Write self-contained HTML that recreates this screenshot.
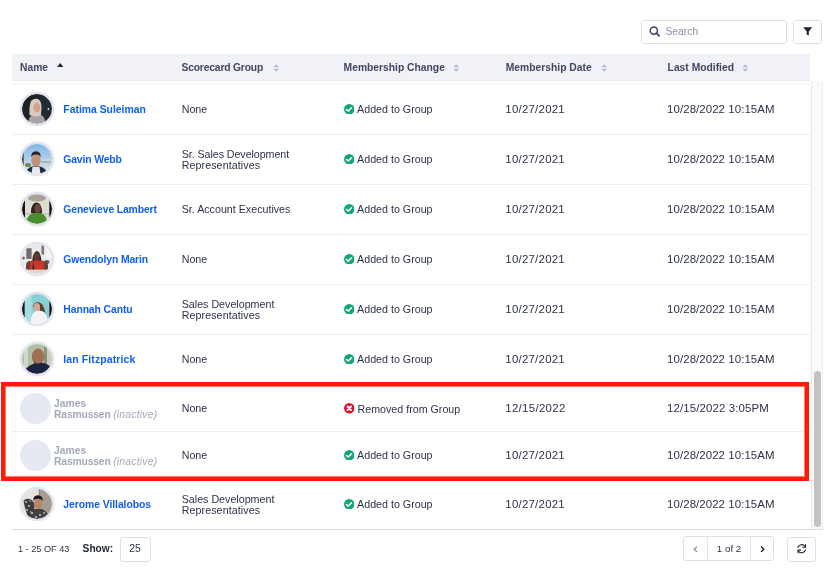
<!DOCTYPE html>
<html><head><meta charset="utf-8"><style>
html,body{margin:0;padding:0;width:835px;height:575px;overflow:hidden;background:#fff;}
body{position:relative;font-family:"Liberation Sans",sans-serif;}
#w{position:absolute;left:0;top:0;width:835px;height:575px;will-change:transform;}
.t{position:absolute;white-space:nowrap;line-height:1;}
.ic{position:absolute;display:block;}
.box{position:absolute;border:1px solid #dde0e8;border-radius:3px;background:#fff;}
.av{position:absolute;width:30px;height:30px;border-radius:50%;border:1px solid #d8dbe7;box-shadow:0 0 0 1px #e3e5ee,0 0 1.5px 1px rgba(200,204,222,0.6);overflow:hidden;}
.av svg{display:block;}
</style></head><body><div id="w">
<div class="box" style="left:641px;top:19.5px;width:144px;height:22px;"></div>
<svg class="ic" style="left:648.6px;top:25.5px" width="12" height="12" viewBox="0 0 12 12"><circle cx="4.8" cy="4.6" r="3.6" fill="none" stroke="#394063" stroke-width="1.5"/><path d="M7.4 7.2 L10.1 9.9" stroke="#394063" stroke-width="1.7" stroke-linecap="round"/></svg>
<div class="t" style="left:665.4px;top:26.57px;font-size:10.2px;color:#8b90a3;font-weight:400;font-style:normal;letter-spacing:0.1px;">Search</div>
<div class="box" style="left:793px;top:19.5px;width:27px;height:22px;"></div>
<svg class="ic" style="left:803px;top:27px" width="10" height="9" viewBox="0 0 10 9"><path d="M0.3 0.3 H9.2 L5.8 4.4 V8.6 L3.7 7.4 V4.4 Z" fill="#1e2333"/></svg>
<div style="position:absolute;left:12px;top:54px;width:798px;height:26px;background:#f0f2f7;"></div>
<div style="position:absolute;left:12px;top:80px;width:798px;height:1px;background:#e6e9f1;"></div>
<div style="position:absolute;left:12px;top:83.5px;width:798px;height:1px;background:#eff1f5;"></div>
<div class="t" style="left:20px;top:63.48px;font-size:10.3px;color:#404762;font-weight:700;font-style:normal;">Name</div>
<svg class="ic" style="left:56.8px;top:63px" width="6.5" height="4.2" viewBox="0 0 6.5 4.2"><path d="M0 4.1 L3.25 0.1 L6.5 4.1 Z" fill="#1e2333"/></svg>
<div class="t" style="left:181.5px;top:63.48px;font-size:10.3px;color:#404762;font-weight:700;font-style:normal;letter-spacing:-0.17px;">Scorecard Group</div>
<svg class="ic" style="left:272.5px;top:63.5px" width="6.5" height="8" viewBox="0 0 6.5 8"><path d="M0.3 3.3 L3.25 0.2 L6.2 3.3 Z M0.3 4.7 L3.25 7.8 L6.2 4.7 Z" fill="#b7bbcb"/></svg>
<div class="t" style="left:343.6px;top:63.48px;font-size:10.3px;color:#404762;font-weight:700;font-style:normal;">Membership Change</div>
<svg class="ic" style="left:452.7px;top:63.5px" width="6.5" height="8" viewBox="0 0 6.5 8"><path d="M0.3 3.3 L3.25 0.2 L6.2 3.3 Z M0.3 4.7 L3.25 7.8 L6.2 4.7 Z" fill="#b7bbcb"/></svg>
<div class="t" style="left:505.8px;top:63.48px;font-size:10.3px;color:#404762;font-weight:700;font-style:normal;">Membership Date</div>
<svg class="ic" style="left:600.5px;top:63.5px" width="6.5" height="8" viewBox="0 0 6.5 8"><path d="M0.3 3.3 L3.25 0.2 L6.2 3.3 Z M0.3 4.7 L3.25 7.8 L6.2 4.7 Z" fill="#b7bbcb"/></svg>
<div class="t" style="left:667.6px;top:63.48px;font-size:10.3px;color:#404762;font-weight:700;font-style:normal;">Last Modified</div>
<svg class="ic" style="left:742px;top:63.5px" width="6.5" height="8" viewBox="0 0 6.5 8"><path d="M0.3 3.3 L3.25 0.2 L6.2 3.3 Z M0.3 4.7 L3.25 7.8 L6.2 4.7 Z" fill="#b7bbcb"/></svg>
<div style="position:absolute;left:811px;top:81px;width:11px;height:448px;background:#fafafa;border-left:1px solid #e8e8e8;border-right:1px solid #efefef;box-sizing:border-box;width:12px"></div>
<div style="position:absolute;left:814px;top:371px;width:7px;height:156px;background:#c2c2c2;border-radius:4px;"></div>
<div style="position:absolute;left:12px;top:134px;width:798px;height:1px;background:#eceef4;"></div>
<div style="position:absolute;left:12px;top:184px;width:798px;height:1px;background:#eceef4;"></div>
<div style="position:absolute;left:12px;top:234px;width:798px;height:1px;background:#eceef4;"></div>
<div style="position:absolute;left:12px;top:284px;width:798px;height:1px;background:#eceef4;"></div>
<div style="position:absolute;left:12px;top:334px;width:798px;height:1px;background:#eceef4;"></div>
<div style="position:absolute;left:12px;top:384px;width:798px;height:1px;background:#eceef4;"></div>
<div style="position:absolute;left:12px;top:431px;width:798px;height:1px;background:#eceef4;"></div>
<div style="position:absolute;left:12px;top:478px;width:798px;height:1px;background:#eceef4;"></div>
<div style="position:absolute;left:12px;top:529px;width:811px;height:1px;background:#d9dde7;"></div>
<div class="av" style="left:20.8px;top:93px;"><svg width="30" height="30" viewBox="0 0 30 30"><defs><clipPath id="c109"><circle cx="15" cy="15" r="15"/></clipPath><filter id="b109" x="-10%" y="-10%" width="120%" height="120%"><feGaussianBlur stdDeviation="0.45"/></filter></defs><g clip-path="url(#c109)"><g filter="url(#b109)"><rect width="30" height="30" fill="#1c2127"/><rect x="18" y="0" width="12" height="30" fill="#222a30"/><path d="M6 30 Q6.5 22 11 21 L19 21 Q23 22 23.5 30Z" fill="#a8a3a8"/><path d="M7.5 21 Q7 12 9 7 Q12 4 16 5 Q19.5 7 19.5 13 L19 21 Q16 23 12 22.5Z" fill="#d8ccc0"/><ellipse cx="14.8" cy="13.5" rx="3.4" ry="5" fill="#d4a28a"/><circle cx="26.4" cy="15" r="0.9" fill="#e8eef0"/></g></g></svg></div>
<div class="t" style="left:63.3px;top:104.70px;font-size:10.4px;color:#0f5ef5;font-weight:700;font-style:normal;">Fatima Suleiman</div>
<div class="t" style="left:181.7px;top:103.64px;font-size:10.7px;color:#2c3249;font-weight:400;font-style:normal;">None</div>
<svg class="ic" style="left:343.7px;top:103.8px" width="10.5" height="10.5" viewBox="0 0 10.5 10.5"><circle cx="5.25" cy="5.25" r="5.25" fill="#12a873"/><path d="M2.4 5.5 L4.3 7.1 L7.5 3.8" fill="none" stroke="#fff" stroke-width="1.5" stroke-linecap="round" stroke-linejoin="round"/></svg>
<div class="t" style="left:357.1px;top:103.74px;font-size:10.7px;color:#2c3249;font-weight:400;font-style:normal;">Added to Group</div>
<div class="t" style="left:505.3px;top:104.41px;font-size:11.45px;color:#2c3249;font-weight:400;font-style:normal;letter-spacing:0.24px;">10/27/2021</div>
<div class="t" style="left:667.1px;top:104.41px;font-size:11.45px;color:#2c3249;font-weight:400;font-style:normal;letter-spacing:0.07px;">10/28/2022 10:15AM</div>
<div class="av" style="left:20.8px;top:143px;"><svg width="30" height="30" viewBox="0 0 30 30"><defs><clipPath id="c159"><circle cx="15" cy="15" r="15"/></clipPath><filter id="b159" x="-10%" y="-10%" width="120%" height="120%"><feGaussianBlur stdDeviation="0.45"/></filter></defs><g clip-path="url(#c159)"><g filter="url(#b159)"><defs><linearGradient id="gsky" x1="0" y1="0" x2="0" y2="1"><stop offset="0" stop-color="#7fb6e6"/><stop offset="1" stop-color="#dfe8ee"/></linearGradient></defs><rect width="30" height="30" fill="url(#gsky)"/><rect x="0" y="8" width="1.6" height="16" fill="#333"/><rect x="19" y="15" width="11" height="7" fill="#d0d4d6"/><rect x="19" y="17" width="11" height="2" fill="#9fb8c8"/><ellipse cx="6" cy="21" rx="3" ry="2" fill="#6d8a4a"/><ellipse cx="14" cy="16.5" rx="4.6" ry="6.3" fill="#c2917a"/><path d="M9.2 13 Q9 7.5 14 7.3 Q18.8 7.5 18.6 13 Q17 10.5 14 10.6 Q11 10.5 9.2 13Z" fill="#2b2320"/><path d="M3 30 Q4.5 24 10 22.5 L18 22.5 Q24 24 26 30Z" fill="#262d3c"/><path d="M9.5 30 L10.5 23 L17.5 23 L18.5 30Z" fill="#e6e8f0"/></g></g></svg></div>
<div class="t" style="left:63.3px;top:154.70px;font-size:10.4px;color:#0f5ef5;font-weight:700;font-style:normal;letter-spacing:-0.15px;">Gavin Webb</div>
<div class="t" style="left:181.7px;top:149.34px;font-size:10.7px;color:#2c3249;font-weight:400;font-style:normal;letter-spacing:-0.06px;">Sr. Sales Development</div>
<div class="t" style="left:181.7px;top:160.24px;font-size:10.7px;color:#2c3249;font-weight:400;font-style:normal;letter-spacing:0.08px;">Representatives</div>
<svg class="ic" style="left:343.7px;top:153.8px" width="10.5" height="10.5" viewBox="0 0 10.5 10.5"><circle cx="5.25" cy="5.25" r="5.25" fill="#12a873"/><path d="M2.4 5.5 L4.3 7.1 L7.5 3.8" fill="none" stroke="#fff" stroke-width="1.5" stroke-linecap="round" stroke-linejoin="round"/></svg>
<div class="t" style="left:357.1px;top:153.74px;font-size:10.7px;color:#2c3249;font-weight:400;font-style:normal;">Added to Group</div>
<div class="t" style="left:505.3px;top:154.41px;font-size:11.45px;color:#2c3249;font-weight:400;font-style:normal;letter-spacing:0.24px;">10/27/2021</div>
<div class="t" style="left:667.1px;top:154.41px;font-size:11.45px;color:#2c3249;font-weight:400;font-style:normal;letter-spacing:0.07px;">10/28/2022 10:15AM</div>
<div class="av" style="left:20.8px;top:193px;"><svg width="30" height="30" viewBox="0 0 30 30"><defs><clipPath id="c209"><circle cx="15" cy="15" r="15"/></clipPath><filter id="b209" x="-10%" y="-10%" width="120%" height="120%"><feGaussianBlur stdDeviation="0.45"/></filter></defs><g clip-path="url(#c209)"><g filter="url(#b209)"><rect width="30" height="30" fill="#dedcd5"/><rect x="0" y="0" width="3" height="30" fill="#121212"/><rect x="27.3" y="0" width="2.7" height="30" fill="#121212"/><ellipse cx="15" cy="4" rx="9" ry="3.6" fill="#a9a396"/><rect x="3" y="19" width="24" height="2" fill="#c8c8c4"/><path d="M9 19 Q9 9 14.5 8.6 Q20 9 20 19Z" fill="#2a211c"/><ellipse cx="15.6" cy="14.5" rx="3.2" ry="4.6" fill="#6b4a3a"/><path d="M4 30 Q5 21 11 19 L19 19 Q25 21 25.5 30Z" fill="#4e8d33"/><rect x="3" y="24" width="1.5" height="6" fill="#46607a"/></g></g></svg></div>
<div class="t" style="left:63.3px;top:204.70px;font-size:10.4px;color:#0f5ef5;font-weight:700;font-style:normal;letter-spacing:-0.14px;">Genevieve Lambert</div>
<div class="t" style="left:181.7px;top:203.64px;font-size:10.7px;color:#2c3249;font-weight:400;font-style:normal;">Sr. Account Executives</div>
<svg class="ic" style="left:343.7px;top:203.8px" width="10.5" height="10.5" viewBox="0 0 10.5 10.5"><circle cx="5.25" cy="5.25" r="5.25" fill="#12a873"/><path d="M2.4 5.5 L4.3 7.1 L7.5 3.8" fill="none" stroke="#fff" stroke-width="1.5" stroke-linecap="round" stroke-linejoin="round"/></svg>
<div class="t" style="left:357.1px;top:203.74px;font-size:10.7px;color:#2c3249;font-weight:400;font-style:normal;">Added to Group</div>
<div class="t" style="left:505.3px;top:204.41px;font-size:11.45px;color:#2c3249;font-weight:400;font-style:normal;letter-spacing:0.24px;">10/27/2021</div>
<div class="t" style="left:667.1px;top:204.41px;font-size:11.45px;color:#2c3249;font-weight:400;font-style:normal;letter-spacing:0.07px;">10/28/2022 10:15AM</div>
<div class="av" style="left:20.8px;top:243px;"><svg width="30" height="30" viewBox="0 0 30 30"><defs><clipPath id="c259"><circle cx="15" cy="15" r="15"/></clipPath><filter id="b259" x="-10%" y="-10%" width="120%" height="120%"><feGaussianBlur stdDeviation="0.45"/></filter></defs><g clip-path="url(#c259)"><g filter="url(#b259)"><rect width="30" height="30" fill="#eaeaea"/><rect x="4.3" y="4.3" width="5.3" height="10.6" fill="#716b70"/><rect x="19.5" y="1.5" width="2.5" height="9" fill="#7a7575"/><rect x="24" y="5" width="5" height="9" fill="#f4f4f2"/><ellipse cx="25" cy="18" rx="2.5" ry="2" fill="#5a6474"/><ellipse cx="1.5" cy="14" rx="1.3" ry="1.5" fill="#6e5a4e"/><path d="M10.2 25 Q9.5 8 15 7 Q20 8 19.5 25Z" fill="#2b1d19"/><ellipse cx="14.8" cy="12.5" rx="3.2" ry="4.3" fill="#5b3a2e"/><path d="M3.5 26 Q4.5 17 10 16.5 L20 16.5 Q25.5 17 26 26Z" fill="#c8372b"/><path d="M4 22 Q4 17 8 17 L8 26 L4 26Z" fill="#6a4030"/><path d="M26 22 Q26 17 22 17 L22 26 L26 26Z" fill="#6a4030"/><path d="M11 17 L12.5 26 L10.5 26Z" fill="#2b1d19"/><rect x="0" y="25.6" width="30" height="4.4" fill="#dcd8cb"/></g></g></svg></div>
<div class="t" style="left:63.3px;top:254.70px;font-size:10.4px;color:#0f5ef5;font-weight:700;font-style:normal;letter-spacing:-0.13px;">Gwendolyn Marin</div>
<div class="t" style="left:181.7px;top:253.64px;font-size:10.7px;color:#2c3249;font-weight:400;font-style:normal;">None</div>
<svg class="ic" style="left:343.7px;top:253.8px" width="10.5" height="10.5" viewBox="0 0 10.5 10.5"><circle cx="5.25" cy="5.25" r="5.25" fill="#12a873"/><path d="M2.4 5.5 L4.3 7.1 L7.5 3.8" fill="none" stroke="#fff" stroke-width="1.5" stroke-linecap="round" stroke-linejoin="round"/></svg>
<div class="t" style="left:357.1px;top:253.74px;font-size:10.7px;color:#2c3249;font-weight:400;font-style:normal;">Added to Group</div>
<div class="t" style="left:505.3px;top:254.41px;font-size:11.45px;color:#2c3249;font-weight:400;font-style:normal;letter-spacing:0.24px;">10/27/2021</div>
<div class="t" style="left:667.1px;top:254.41px;font-size:11.45px;color:#2c3249;font-weight:400;font-style:normal;letter-spacing:0.07px;">10/28/2022 10:15AM</div>
<div class="av" style="left:20.8px;top:293px;"><svg width="30" height="30" viewBox="0 0 30 30"><defs><clipPath id="c309"><circle cx="15" cy="15" r="15"/></clipPath><filter id="b309" x="-10%" y="-10%" width="120%" height="120%"><feGaussianBlur stdDeviation="0.45"/></filter></defs><g clip-path="url(#c309)"><g filter="url(#b309)"><rect width="30" height="30" fill="#88d0d4"/><rect x="2.6" y="0" width="7" height="30" fill="#a6dfe2"/><rect x="0" y="0" width="2.6" height="30" fill="#121212"/><rect x="27.4" y="0" width="2.6" height="30" fill="#121212"/><path d="M11 13 Q11 8 16.5 8.2 Q22 8.8 23.5 20 L19 20 L18 15Z" fill="#5b3d2f"/><ellipse cx="14.8" cy="13.3" rx="3.3" ry="4.2" fill="#d4a994"/><path d="M8.5 30 Q8.5 19 14 17 L20 17 Q26 19 26 30Z" fill="#f4f4f4"/></g></g></svg></div>
<div class="t" style="left:63.3px;top:304.70px;font-size:10.4px;color:#0f5ef5;font-weight:700;font-style:normal;letter-spacing:-0.1px;">Hannah Cantu</div>
<div class="t" style="left:181.7px;top:299.34px;font-size:10.7px;color:#2c3249;font-weight:400;font-style:normal;">Sales Development</div>
<div class="t" style="left:181.7px;top:310.24px;font-size:10.7px;color:#2c3249;font-weight:400;font-style:normal;letter-spacing:0.08px;">Representatives</div>
<svg class="ic" style="left:343.7px;top:303.8px" width="10.5" height="10.5" viewBox="0 0 10.5 10.5"><circle cx="5.25" cy="5.25" r="5.25" fill="#12a873"/><path d="M2.4 5.5 L4.3 7.1 L7.5 3.8" fill="none" stroke="#fff" stroke-width="1.5" stroke-linecap="round" stroke-linejoin="round"/></svg>
<div class="t" style="left:357.1px;top:303.74px;font-size:10.7px;color:#2c3249;font-weight:400;font-style:normal;">Added to Group</div>
<div class="t" style="left:505.3px;top:304.41px;font-size:11.45px;color:#2c3249;font-weight:400;font-style:normal;letter-spacing:0.24px;">10/27/2021</div>
<div class="t" style="left:667.1px;top:304.41px;font-size:11.45px;color:#2c3249;font-weight:400;font-style:normal;letter-spacing:0.07px;">10/28/2022 10:15AM</div>
<div class="av" style="left:20.8px;top:343px;"><svg width="30" height="30" viewBox="0 0 30 30"><defs><clipPath id="c359"><circle cx="15" cy="15" r="15"/></clipPath><filter id="b359" x="-10%" y="-10%" width="120%" height="120%"><feGaussianBlur stdDeviation="0.45"/></filter></defs><g clip-path="url(#c359)"><g filter="url(#b359)"><rect width="30" height="30" fill="#b3bfa3"/><rect x="2" y="0" width="4" height="30" fill="#cfd8c8"/><rect x="22" y="0" width="3" height="30" fill="#8a8f78"/><rect x="25" y="0" width="5" height="30" fill="#c4ceb8"/><ellipse cx="16" cy="12.6" rx="6.2" ry="8" fill="#9f6f56"/><path d="M12 18 Q16 22 20 18 L20 21 Q16 23 12 21Z" fill="#2c221e"/><path d="M1.5 30 Q4 22 11 20 L22 19 Q28 21 29.5 25 L29 30Z" fill="#1b2340"/></g></g></svg></div>
<div class="t" style="left:63.3px;top:354.70px;font-size:10.4px;color:#0f5ef5;font-weight:700;font-style:normal;letter-spacing:0.15px;">Ian Fitzpatrick</div>
<div class="t" style="left:181.7px;top:353.64px;font-size:10.7px;color:#2c3249;font-weight:400;font-style:normal;">None</div>
<svg class="ic" style="left:343.7px;top:353.8px" width="10.5" height="10.5" viewBox="0 0 10.5 10.5"><circle cx="5.25" cy="5.25" r="5.25" fill="#12a873"/><path d="M2.4 5.5 L4.3 7.1 L7.5 3.8" fill="none" stroke="#fff" stroke-width="1.5" stroke-linecap="round" stroke-linejoin="round"/></svg>
<div class="t" style="left:357.1px;top:353.74px;font-size:10.7px;color:#2c3249;font-weight:400;font-style:normal;">Added to Group</div>
<div class="t" style="left:505.3px;top:354.41px;font-size:11.45px;color:#2c3249;font-weight:400;font-style:normal;letter-spacing:0.24px;">10/27/2021</div>
<div class="t" style="left:667.1px;top:354.41px;font-size:11.45px;color:#2c3249;font-weight:400;font-style:normal;letter-spacing:0.07px;">10/28/2022 10:15AM</div>
<div style="position:absolute;left:20px;top:392.5px;width:31px;height:31px;border-radius:50%;background:#e6e9f1;"></div>
<div class="t" style="left:54px;top:399.40px;font-size:10.4px;color:#a4a9bb;font-weight:700;font-style:normal;">James</div>
<div class="t" style="left:54px;top:410.30px;font-size:10.4px;color:#a4a9bb;font-weight:700;font-style:normal;letter-spacing:-0.2px;">Rasmussen</div>
<div class="t" style="left:113.2px;top:410.30px;font-size:10.4px;color:#a4a9bb;font-weight:400;font-style:italic;letter-spacing:0.2px;">(inactive)</div>
<div class="t" style="left:181.7px;top:402.64px;font-size:10.7px;color:#2c3249;font-weight:400;font-style:normal;">None</div>
<svg class="ic" style="left:343.8px;top:403.0px" width="10.5" height="10.5" viewBox="0 0 10.5 10.5"><circle cx="5.25" cy="5.25" r="5.25" fill="#de0f2f"/><path d="M3.5 3.5 L7 7 M7 3.5 L3.5 7" fill="none" stroke="#fff" stroke-width="1.9" stroke-linecap="round"/></svg>
<div class="t" style="left:357.5px;top:403.74px;font-size:10.7px;color:#2c3249;font-weight:400;font-style:normal;">Removed from Group</div>
<div class="t" style="left:505.3px;top:403.41px;font-size:11.45px;color:#2c3249;font-weight:400;font-style:normal;letter-spacing:0.3px;">12/15/2022</div>
<div class="t" style="left:667.1px;top:403.41px;font-size:11.45px;color:#2c3249;font-weight:400;font-style:normal;letter-spacing:0.12px;">12/15/2022 3:05PM</div>
<div style="position:absolute;left:20px;top:439.5px;width:31px;height:31px;border-radius:50%;background:#e6e9f1;"></div>
<div class="t" style="left:54px;top:446.40px;font-size:10.4px;color:#a4a9bb;font-weight:700;font-style:normal;">James</div>
<div class="t" style="left:54px;top:457.30px;font-size:10.4px;color:#a4a9bb;font-weight:700;font-style:normal;letter-spacing:-0.2px;">Rasmussen</div>
<div class="t" style="left:113.2px;top:457.30px;font-size:10.4px;color:#a4a9bb;font-weight:400;font-style:italic;letter-spacing:0.2px;">(inactive)</div>
<div class="t" style="left:181.7px;top:449.64px;font-size:10.7px;color:#2c3249;font-weight:400;font-style:normal;">None</div>
<svg class="ic" style="left:343.7px;top:449.8px" width="10.5" height="10.5" viewBox="0 0 10.5 10.5"><circle cx="5.25" cy="5.25" r="5.25" fill="#12a873"/><path d="M2.4 5.5 L4.3 7.1 L7.5 3.8" fill="none" stroke="#fff" stroke-width="1.5" stroke-linecap="round" stroke-linejoin="round"/></svg>
<div class="t" style="left:357.1px;top:449.74px;font-size:10.7px;color:#2c3249;font-weight:400;font-style:normal;">Added to Group</div>
<div class="t" style="left:505.3px;top:450.41px;font-size:11.45px;color:#2c3249;font-weight:400;font-style:normal;letter-spacing:0.24px;">10/27/2021</div>
<div class="t" style="left:667.1px;top:450.41px;font-size:11.45px;color:#2c3249;font-weight:400;font-style:normal;letter-spacing:0.07px;">10/28/2022 10:15AM</div>
<div class="av" style="left:20.8px;top:488px;"><svg width="30" height="30" viewBox="0 0 30 30"><defs><clipPath id="c504"><circle cx="15" cy="15" r="15"/></clipPath><filter id="b504" x="-10%" y="-10%" width="120%" height="120%"><feGaussianBlur stdDeviation="0.45"/></filter></defs><g clip-path="url(#c504)"><g filter="url(#b504)"><rect width="30" height="30" fill="#e6e4e0"/><rect x="16.8" y="0" width="13.2" height="30" fill="#a59c92"/><rect x="16.8" y="0" width="1" height="30" fill="#8d857c"/><path d="M1.5 12 Q4 8.5 9 10.5 L12.5 14 L12.5 28 L6 28 Q3 20 1.5 12Z" fill="#3e3a3c"/><circle cx="4" cy="13" r="0.9" fill="#d0d0d0"/><circle cx="7" cy="17" r="0.9" fill="#d8d8d8"/><circle cx="5" cy="21" r="0.9" fill="#cfcfcf"/><circle cx="9" cy="23" r="0.9" fill="#d5d5d5"/><circle cx="8" cy="12" r="0.8" fill="#bcbcbc"/><ellipse cx="16" cy="15" rx="4.2" ry="5.2" fill="#b98468"/><path d="M11.3 12 Q10.8 6.3 15.8 6.2 Q20.8 6.3 20.8 12 Q19 9.5 15.8 9.8 Q12.8 9.8 11.3 12Z" fill="#1b1714"/><path d="M6 30 Q8 21 13 20 L20 20 Q26 22 27 30Z" fill="#454143"/><circle cx="10" cy="24" r="1" fill="#d5d5d5"/><circle cx="18" cy="26" r="1" fill="#c8c8c8"/><circle cx="14" cy="28" r="0.9" fill="#d5d5d5"/><circle cx="22" cy="24" r="0.9" fill="#bdbdbd"/></g></g></svg></div>
<div class="t" style="left:63.3px;top:499.70px;font-size:10.4px;color:#0f5ef5;font-weight:700;font-style:normal;letter-spacing:-0.06px;">Jerome Villalobos</div>
<div class="t" style="left:181.7px;top:494.34px;font-size:10.7px;color:#2c3249;font-weight:400;font-style:normal;">Sales Development</div>
<div class="t" style="left:181.7px;top:505.24px;font-size:10.7px;color:#2c3249;font-weight:400;font-style:normal;letter-spacing:0.08px;">Representatives</div>
<svg class="ic" style="left:343.7px;top:498.8px" width="10.5" height="10.5" viewBox="0 0 10.5 10.5"><circle cx="5.25" cy="5.25" r="5.25" fill="#12a873"/><path d="M2.4 5.5 L4.3 7.1 L7.5 3.8" fill="none" stroke="#fff" stroke-width="1.5" stroke-linecap="round" stroke-linejoin="round"/></svg>
<div class="t" style="left:357.1px;top:498.74px;font-size:10.7px;color:#2c3249;font-weight:400;font-style:normal;">Added to Group</div>
<div class="t" style="left:505.3px;top:499.41px;font-size:11.45px;color:#2c3249;font-weight:400;font-style:normal;letter-spacing:0.24px;">10/27/2021</div>
<div class="t" style="left:667.1px;top:499.41px;font-size:11.45px;color:#2c3249;font-weight:400;font-style:normal;letter-spacing:0.07px;">10/28/2022 10:15AM</div>
<div style="position:absolute;left:1px;top:382px;width:808px;height:99px;border:4px solid #ff1a0a;box-sizing:border-box;"></div>
<div style="position:absolute;left:5px;top:386px;width:800px;height:91px;border:1px solid rgba(255,26,10,0.6);box-sizing:border-box;"></div>
<div class="t" style="left:17.9px;top:544.81px;font-size:9.2px;color:#2c3249;font-weight:400;font-style:normal;">1 - 25 OF 43</div>
<div class="t" style="left:82.6px;top:544.47px;font-size:10.2px;color:#1e2333;font-weight:700;font-style:normal;">Show:</div>
<div class="box" style="left:120px;top:537px;width:29px;height:23px;"></div>
<div class="t" style="left:129.3px;top:544.20px;font-size:10.4px;color:#2c3249;font-weight:400;font-style:normal;">25</div>
<div class="box" style="left:683px;top:536px;width:89px;height:23px;"></div>
<div style="position:absolute;left:707px;top:537px;width:1px;height:23px;background:#e3e6ee;"></div>
<div style="position:absolute;left:750px;top:537px;width:1px;height:23px;background:#e3e6ee;"></div>
<svg class="ic" style="left:693px;top:545.5px" width="5" height="6.5" viewBox="0 0 5 6.5"><path d="M4 0.6 L1.2 3.25 L4 5.9" fill="none" stroke="#8b90a3" stroke-width="1.3"/></svg>
<div class="t" style="left:716.8px;top:544.00px;font-size:9.8px;color:#2c3249;font-weight:400;font-style:normal;">1 of 2</div>
<svg class="ic" style="left:759.5px;top:545.5px" width="5" height="6.5" viewBox="0 0 5 6.5"><path d="M1 0.6 L3.8 3.25 L1 5.9" fill="none" stroke="#1e2333" stroke-width="1.4"/></svg>
<div class="box" style="left:787px;top:537px;width:27px;height:23px;"></div>
<svg class="ic" style="left:796.5px;top:544.3px" width="9.4" height="9.4" viewBox="0 0 10 10"><g fill="none" stroke="#1e2333" stroke-width="1.15" stroke-linecap="round"><path d="M0.9 3.6 A4.3 4.3 0 0 1 8.3 2.2"/><path d="M9 0.6 V3.5 H6.1"/><path d="M9.1 6.4 A4.3 4.3 0 0 1 1.7 7.8"/><path d="M1 9.4 V6.5 H3.9"/></g></svg>
</div></body></html>
